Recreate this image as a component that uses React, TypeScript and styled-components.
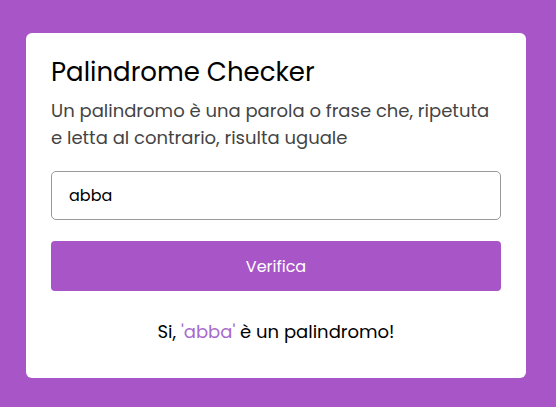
import React from "react";
import styled, { createGlobalStyle } from "styled-components";

const Global = createGlobalStyle`
  html, body { margin: 0; padding: 0; background: #a855c8; }
  body { font-family: "Poppins", "Open Sans", "Liberation Sans", sans-serif; }
  * { box-sizing: border-box; }
`;

const Page = styled.div`
  width: 556px;
  height: 407px;
  padding: 33px 30px 0 26px;
`;

const Card = styled.div`
  width: 500px;
  height: 345px;
  background: #fff;
  border-radius: 6px;
  padding: 21px 25px 0 25px;
  display: flex;
  flex-direction: column;
`;

const Title = styled.h1`
  margin: 0;
  font-size: 26px;
  font-weight: 400;
  line-height: 36px;
  color: #000;
`;

const Desc = styled.p`
  margin: 7px 0 0;
  font-size: 18px;
  line-height: 27px;
  color: #444;
`;

const Input = styled.input`
  margin-top: 20px;
  width: 100%;
  height: 49px;
  border: 1px solid #999;
  border-radius: 5px;
  padding: 0 17px;
  font-family: inherit;
  font-size: 16px;
  color: #000;
  outline: none;
`;

const Button = styled.button`
  margin-top: 21px;
  width: 100%;
  height: 50px;
  border: none;
  border-radius: 4px;
  background: #a855c8;
  color: #fff;
  font-family: inherit;
  font-size: 16px;
`;

const Result = styled.p`
  margin: 27px 0 0;
  text-align: center;
  font-size: 18px;
  line-height: 27px;
  color: #000;
`;

const Word = styled.span`
  color: #a86bcc;
`;

export default function App() {
  return (
    <>
      <Global />
      <Page>
        <Card>
          <Title>Palindrome Checker</Title>
          <Desc>
            Un palindromo è una parola o frase che, ripetuta e letta al contrario, risulta uguale
          </Desc>
          <Input defaultValue="abba" />
          <Button>Verifica</Button>
          <Result>
            Si, <Word>'abba'</Word> è un palindromo!
          </Result>
        </Card>
      </Page>
    </>
  );
}
